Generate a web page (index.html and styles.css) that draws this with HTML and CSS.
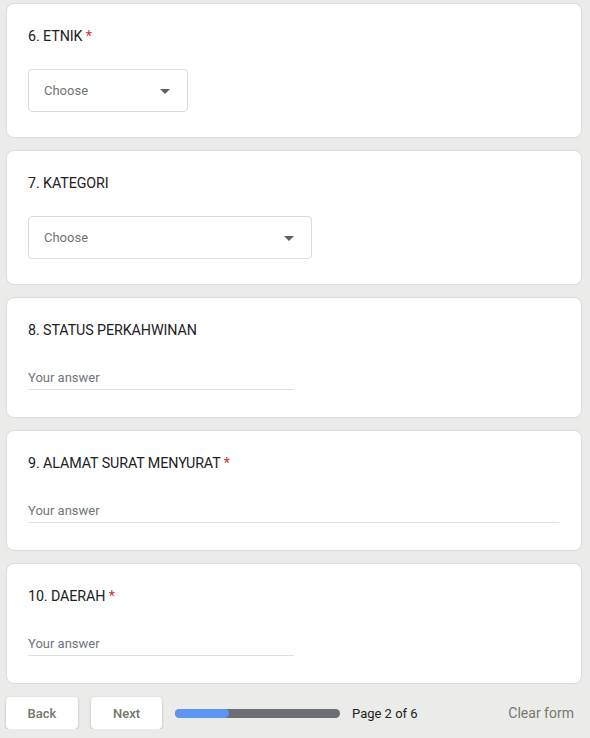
FILE: index.html
```html
<!DOCTYPE html>
<html lang="ms">
<head>
<meta charset="utf-8">
<title>Form</title>
<link rel="stylesheet" href="styles.css">
</head>
<body>
<main class="page">
  <section class="card">
    <div class="q-title">6. ETNIK <span class="req">*</span></div>
    <div class="select select-short">
      <span class="select-label">Choose</span>
      <svg class="caret" width="10" height="5" viewBox="0 0 10 5"><path d="M0 0h10L5 5z" fill="#5f6368"/></svg>
    </div>
  </section>
  <section class="card">
    <div class="q-title">7. KATEGORI</div>
    <div class="select select-long">
      <span class="select-label">Choose</span>
      <svg class="caret" width="10" height="5" viewBox="0 0 10 5"><path d="M0 0h10L5 5z" fill="#5f6368"/></svg>
    </div>
  </section>
  <section class="card card-text">
    <div class="q-title">8. STATUS PERKAHWINAN</div>
    <div class="answer answer-short">Your answer</div>
  </section>
  <section class="card card-text">
    <div class="q-title">9. ALAMAT SURAT MENYURAT <span class="req">*</span></div>
    <div class="answer answer-long">Your answer</div>
  </section>
  <section class="card card-text">
    <div class="q-title">10. DAERAH <span class="req">*</span></div>
    <div class="answer answer-short">Your answer</div>
  </section>
  <footer class="nav">
    <button class="btn btn-back">Back</button>
    <button class="btn btn-next">Next</button>
    <div class="progress"><div class="progress-fill" style="width: 33%"></div></div>
    <span class="page-label">Page 2 of 6</span>
    <span class="clear">Clear form</span>
  </footer>
</main>
</body>
</html>
```
FILE: styles.css
```css
* { box-sizing: border-box; }
html, body { margin: 0; padding: 0; }
body {
  background: #ebebe9;
  font-family: Roboto, "Liberation Sans", Arial, sans-serif;
  color: #202124;
}
.page {
  width: 590px;
  padding: 3px 8px 0 6px;
  display: flex;
  flex-direction: column;
  gap: 12px;
}
.card {
  background: #fff;
  border: 1px solid #dadce0;
  border-radius: 8px;
  padding: 21px 21px 25px;
  height: 135px;
}
.card-text { height: 121px; }
.q-title {
  font-size: 14.3px;
  line-height: 22px;
  letter-spacing: -0.1px;
  color: #202124;
}
.req { color: #d93025; }
.select {
  margin-top: 22px;
  height: 43px;
  border: 1px solid #dadce0;
  border-radius: 4px;
  display: flex;
  align-items: center;
  justify-content: space-between;
  padding: 0 17px 0 15px;
}
.select-short { width: 160px; }
.select-long { width: 284px; }
.select-label {
  font-size: 13px;
  color: #70757a;
}
.caret { display: block; margin-top: 1px; }
.answer {
  margin-top: 26px;
  height: 23px;
  font-size: 13px;
  line-height: 21px;
  color: #70757a;
  border-bottom: 1px solid #e0e0e0;
}
.answer-short { width: 266px; }
.answer-long { width: 531px; }
.nav {
  display: flex;
  align-items: center;
  height: 32px;
  margin-top: 1px;
}
.btn {
  height: 32px;
  border: none;
  background: #fff;
  border-radius: 4px;
  box-shadow: 0 1px 2px rgba(60,64,67,0.25), 0 1px 3px rgba(60,64,67,0.1);
  font-family: Roboto, "Liberation Sans", Arial, sans-serif;
  font-size: 13px;
  font-weight: 500;
  color: #73776c;
  padding: 0;
}
.btn-back { width: 72px; }
.btn-next { width: 71px; margin-left: 13px; }
.progress {
  margin-left: 13px;
  width: 165px;
  height: 9px;
  border-radius: 5px;
  background: #6b6e73;
  overflow: hidden;
}
.progress-fill {
  height: 100%;
  background: #5d95f4;
  border-radius: 5px;
}
.page-label {
  margin-left: 12px;
  font-size: 13px;
  color: #202124;
}
.clear {
  margin-left: auto;
  margin-right: 8px;
  font-size: 14px;
  color: #767a6e;
}
```
